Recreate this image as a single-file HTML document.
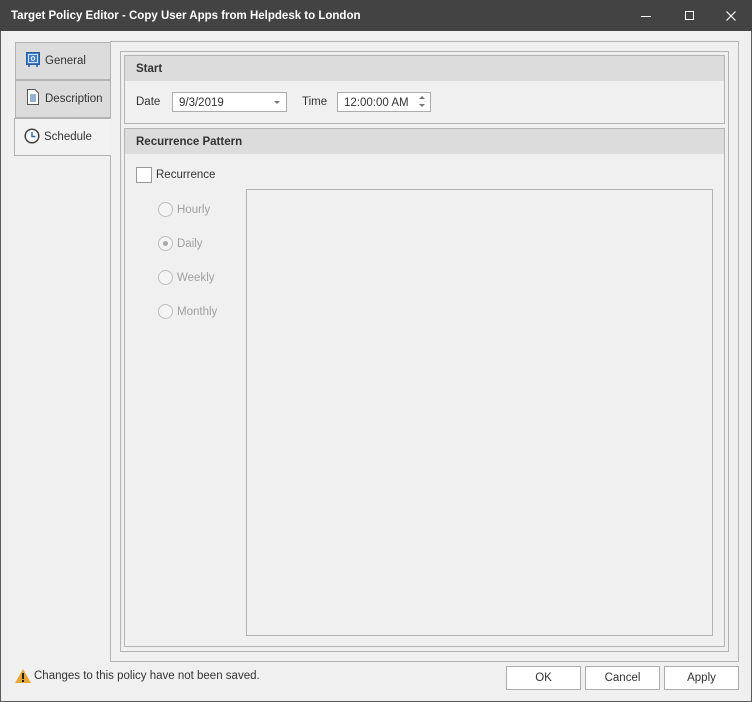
<!DOCTYPE html>
<html><head><style>
*{box-sizing:border-box;margin:0;padding:0}
body{width:752px;height:702px;background:#f0f0f0;font-family:"Liberation Sans",sans-serif;font-size:11px;color:#333;position:relative;overflow:hidden}
.a{position:absolute}
.win{left:0;top:0;width:752px;height:702px;border:1px solid #5a5a5a}
.title{left:0;top:0;width:752px;height:31px;background:#434343;color:#fff;font-weight:bold;font-size:11.5px;padding:10px 0 0 11px}
.box{border:1px solid #b4b4b4}
.tab{background:#dcdcdc;border:1px solid #b4b4b4;font-size:11.5px;color:#333}
.hdr{background:#dcdcdc;font-weight:bold;font-size:11.5px;padding:7px 0 0 11px;height:25px}
.inp{background:#fff;border:1px solid #acacac;font-size:11.5px;padding:4px 0 0 6px;height:20px}
.btn{background:#fff;border:1px solid #adadad;font-size:11.5px;text-align:center;padding-top:5px;height:24px;width:75px;top:666px}
.rad{width:15px;height:15px;border:1px solid #bdbdbd;border-radius:50%;background:#f4f4f4}
.rl{color:#a0a0a0;font-size:11.5px}
</style></head><body>
<div class="a win"></div>
<div class="a title">Target Policy Editor - Copy User Apps from Helpdesk to London</div>
<div class="a" style="left:641px;top:16px;width:10px;height:1px;background:#fff"></div>
<div class="a" style="left:685px;top:11px;width:9px;height:9px;border:1px solid #fff"></div>
<svg class="a" style="left:726px;top:11px" width="10" height="10"><path d="M0.5 0.5L9.5 9.5M9.5 0.5L0.5 9.5" stroke="#fff" stroke-width="1.2"/></svg>

<div class="a box" style="left:110px;top:41px;width:629px;height:621px"></div>
<div class="a box" style="left:120px;top:51px;width:609px;height:601px"></div>

<div class="a tab" style="left:15px;top:42px;width:96px;height:38px"></div>
<div class="a tab" style="left:15px;top:80px;width:96px;height:38px"></div>
<div class="a" style="left:14px;top:118px;width:97px;height:38px;background:#f2f2f2;border:1px solid #b4b4b4;border-right:none"></div>
<svg class="a" style="left:26px;top:52px" width="14" height="15"><rect x="0.5" y="0.5" width="13" height="12" fill="#3d7bc4" stroke="#2a5e9e"/><rect x="2.5" y="2.5" width="9" height="8" fill="none" stroke="#cfe0f5"/><circle cx="7" cy="6.5" r="1.8" fill="none" stroke="#fff"/><rect x="2" y="13" width="2" height="2" fill="#3d7bc4"/><rect x="10" y="13" width="2" height="2" fill="#3d7bc4"/></svg>
<div class="a" style="left:45px;top:55px;font-size:11.5px">General</div>
<svg class="a" style="left:27px;top:89px" width="12" height="16"><path d="M0.5 0.5H8L11.5 4V15.5H0.5Z" fill="#fff" stroke="#555"/><path d="M3 6H9M3 8H9M3 10H9M3 12H9" stroke="#2f63a8"/></svg>
<div class="a" style="left:45px;top:93px;font-size:11.5px">Description</div>
<svg class="a" style="left:24px;top:128px" width="16" height="16"><circle cx="8" cy="8" r="6.8" fill="#fff" stroke="#444" stroke-width="1.5"/><path d="M8 4V8.5H11.5" fill="none" stroke="#2f63a8" stroke-width="1.5"/></svg>
<div class="a" style="left:44px;top:131px;font-size:11.5px">Schedule</div>

<div class="a box" style="left:124px;top:55px;width:601px;height:69px"></div>
<div class="a hdr" style="left:125px;top:56px;width:599px">Start</div>
<div class="a" style="left:136px;top:96px;font-size:11.5px">Date</div>
<div class="a inp" style="left:172px;top:92px;width:115px">9/3/2019</div>
<div class="a" style="left:274px;top:101px;width:0;height:0;border-left:3px solid transparent;border-right:3px solid transparent;border-top:3px solid #777"></div>
<div class="a" style="left:302px;top:96px;font-size:11.5px">Time</div>
<div class="a inp" style="left:337px;top:92px;width:94px">12:00:00 AM</div>
<div class="a" style="left:419px;top:96px;border-left:3px solid transparent;border-right:3px solid transparent;border-bottom:3px solid #777"></div>
<div class="a" style="left:419px;top:104px;border-left:3px solid transparent;border-right:3px solid transparent;border-top:3px solid #777"></div>

<div class="a box" style="left:124px;top:128px;width:601px;height:519px"></div>
<div class="a hdr" style="left:125px;top:129px;width:599px">Recurrence Pattern</div>
<div class="a" style="left:136px;top:167px;width:16px;height:16px;background:#fff;border:1px solid #999"></div>
<div class="a" style="left:156px;top:169px;font-size:11.5px">Recurrence</div>

<div class="a rad" style="left:158px;top:202px"></div><div class="a rl" style="left:177px;top:204px">Hourly</div>
<div class="a rad" style="left:158px;top:236px"></div><div class="a" style="left:163px;top:241px;width:5px;height:5px;border-radius:50%;background:#aaa"></div><div class="a rl" style="left:177px;top:238px">Daily</div>
<div class="a rad" style="left:158px;top:270px"></div><div class="a rl" style="left:177px;top:272px">Weekly</div>
<div class="a rad" style="left:158px;top:304px"></div><div class="a rl" style="left:177px;top:306px">Monthly</div>

<div class="a box" style="left:246px;top:189px;width:467px;height:447px"></div>

<svg class="a" style="left:14px;top:668px" width="18" height="16"><path d="M9 1L17 15H1Z" fill="#e8a838"/><rect x="8" y="5" width="2" height="6" fill="#222"/><rect x="8" y="12" width="2" height="2" fill="#222"/></svg>
<div class="a" style="left:34px;top:670px;font-size:11.5px;color:#333">Changes to this policy have not been saved.</div>
<div class="a btn" style="left:506px">OK</div>
<div class="a btn" style="left:585px">Cancel</div>
<div class="a btn" style="left:664px">Apply</div>
</body></html>
